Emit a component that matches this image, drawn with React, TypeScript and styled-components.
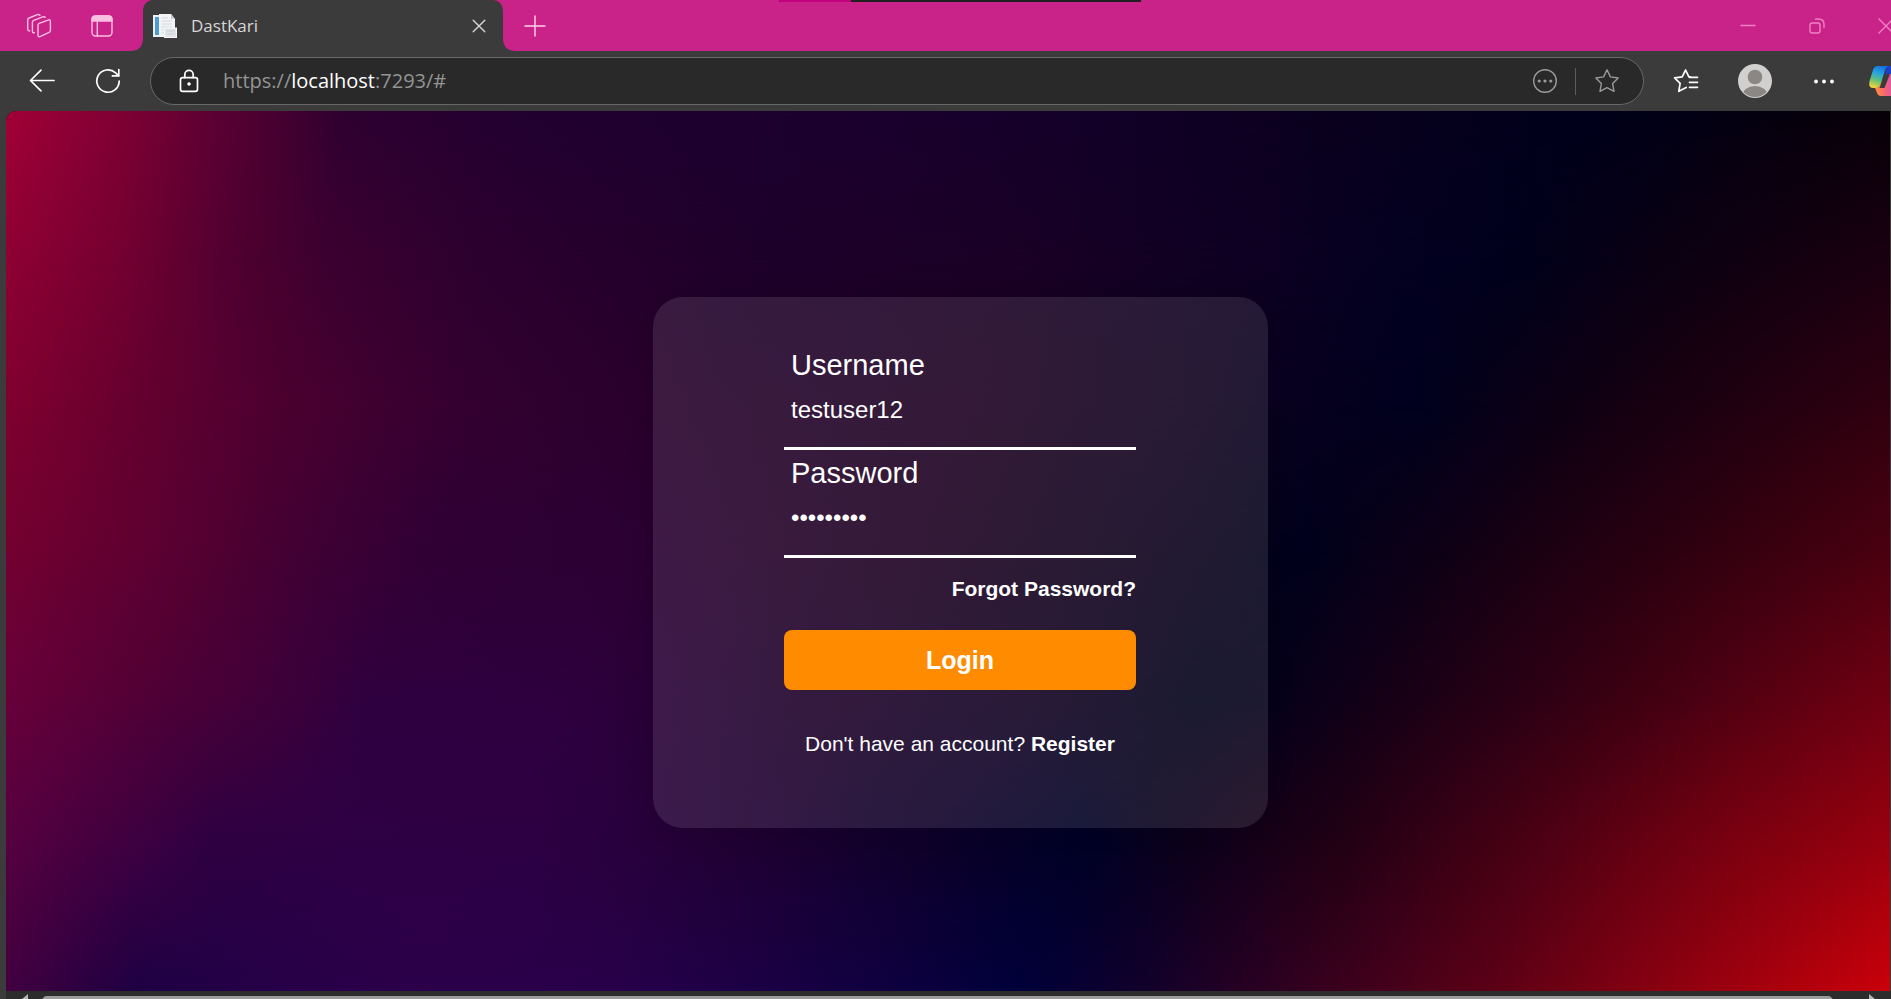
import React from "react";
import styled, { createGlobalStyle } from "styled-components";

const GlobalStyle = createGlobalStyle`
  * { box-sizing: border-box; }
  body { margin: 0; background: #3b3b3b; }
`;

const uiFont = `"Segoe UI", "Open Sans", sans-serif`;
const pageFont = `Arial, "Liberation Sans", sans-serif`;

/* ---------- Browser frame ---------- */

const Browser = styled.div`
  position: relative;
  display: flex;
  flex-direction: column;
  height: 100vh;
  overflow: hidden;
  background: #3b3b3b;
`;

const TitleBar = styled.header`
  display: flex;
  align-items: stretch;
  flex: none;
  height: 51px;
  padding-left: 7px;
  background: #c92288;
  overflow: hidden;
`;

const LoadingStrip = styled.div`
  position: absolute;
  top: 0;
  left: 41.2%;
  display: flex;
  width: 362px;
  height: 2px;
  background: linear-gradient(to right, #c0007c 72px, #1f1f1f 72px);
`;

const IconButton = styled.button<{ $width: number; $color?: string }>`
  display: flex;
  align-items: center;
  justify-content: center;
  flex: none;
  width: ${(p) => p.$width}px;
  padding: 0;
  border: 0;
  background: none;
  color: ${(p) => p.$color ?? "#ffffff"};

  svg {
    flex: none;
  }
`;

const Tab = styled.div`
  position: relative;
  display: flex;
  align-items: center;
  flex: none;
  width: 360px;
  height: 51px;
  margin: 0 8px 0 10px;
  padding: 0 12px 0 10px;
  border-radius: 10px 10px 0 0;
  background: #3b3b3b;

  &::before,
  &::after {
    content: "";
    position: absolute;
    bottom: 0;
    width: 10px;
    height: 10px;
  }
  &::before {
    right: 100%;
    background: radial-gradient(circle at 0 0, transparent 9px, #3b3b3b 10px);
  }
  &::after {
    left: 100%;
    background: radial-gradient(circle at 100% 0, transparent 9px, #3b3b3b 10px);
  }
`;

const TabTitle = styled.span`
  flex: 1;
  margin-left: 14px;
  color: #d6d6d6;
  font: 17px/24px ${uiFont};
`;

const WindowControls = styled.div`
  display: flex;
  margin-left: auto;
  margin-right: -29px;
`;

const Toolbar = styled.nav`
  display: flex;
  align-items: stretch;
  flex: none;
  height: 60px;
  padding: 6px 0 6px 9px;
  overflow: hidden;
`;

const AddressBar = styled.div`
  display: flex;
  align-items: center;
  flex: 1;
  min-width: 0;
  margin: 0 7px 0 9px;
  padding: 0 11px 0 26px;
  border: 1px solid #686868;
  border-radius: 24px;
  background: #292929;
`;

const Url = styled.div`
  flex: 1;
  margin-left: 22px;
  color: #949494;
  font: 20px/28px ${uiFont};
  white-space: nowrap;

  b {
    color: #ffffff;
    font-weight: 400;
  }
`;

const Divider = styled.span`
  width: 1px;
  height: 27px;
  margin: 0 6px 0 5px;
  background: #5c5c5c;
`;

const ToolbarActions = styled.div`
  display: flex;
  margin-right: -21px;
`;

const Scrollbar = styled.div`
  display: flex;
  align-items: flex-start;
  flex: none;
  height: 8px;
  margin-left: 6px;
  padding: 0 15px 0 15px;
  background: #2c2c2c;
  overflow: hidden;
`;

const ScrollThumb = styled.div`
  flex: 1;
  height: 10px;
  margin: 5px 35px 0 13px;
  border-radius: 5px;
  background: #9c9c9c;
`;

const ScrollArrow = styled.svg`
  flex: none;
  margin-top: 3px;
`;

/* ---------- Page backdrop ---------- */

const Page = styled.main`
  position: relative;
  isolation: isolate;
  display: flex;
  align-items: center;
  justify-content: center;
  flex: 1;
  margin: 0 1px 0 6px;
  padding: 22px 0 0 24px;
  border-radius: 10px 0 0 0;
  background: #14001f;
  overflow: hidden;
`;

/* Each wash fades in down to its own line, so neighbours blend into a soft mesh. */
const Wash = styled.div<{ $stops: string; $from: number; $to: number }>`
  position: absolute;
  inset: 0;
  z-index: -1;
  background: linear-gradient(to right, ${(p) => p.$stops});
  mask-image: linear-gradient(to bottom, transparent ${(p) => p.$from}%, #000 ${(p) => p.$to}%);
`;

const washes = [
  "#a20036, #800034 6%, #560032 12%, #2e0030 18%, #220030 27%, #1b002e 44%, #130028 58%, #0a001e 70%, #00001b 84%, #05000e 94%, #080008",
  "#8e0032, #740031 6%, #500030 12%, #3c0030 17%, #2c002e 25%, #1e002a 40%, #190025 54%, #0e0022 66%, #040020 74%, #00001c 80%, #0a0012 88%, #1a0010",
  "#80002f, #64002f 7%, #4a0030 15%, #340030 24%, #24002a 38%, #1c0021 52%, #110020 62%, #05001e 70%, #00001e 75%, #0c0014 82%, #1c0010 90%, #300010",
  "#730030, #5c0031 8%, #430033 15%, #310035 22%, #2b0033 33%, #200024 45%, #15001d 55%, #08001a 64%, #00001c 69%, #0c0016 75%, #260010 86%, #4a000f",
  "#68003a, #520036 7%, #420038 13%, #30003f 19%, #2e003e 30%, #1f002a 42%, #120022 54%, #02001a 63%, #04001a 67%, #1a0016 75%, #3c0012 86%, #700012",
  "#560040, #440040 5%, #2e0042 11%, #2e0045 18%, #2d0044 28%, #220034 38%, #0f002a 48%, #000026 57%, #0a001c 62%, #220014 71%, #500014 82%, #780010 91%, #9a000e",
  "#420040, #2c0040 4%, #1e0044 7%, #260048 14%, #2c004a 22%, #28004a 32%, #180044 42%, #08003e 50%, #00003a 54%, #10002c 60%, #300020 68%, #5c0016 79%, #900010 89%, #ca000a",
];

/* ---------- Login card ---------- */

const Card = styled.form`
  display: flex;
  flex-direction: column;
  align-items: center;
  flex: 0 1 615px;
  padding: 52px 24px 72px;
  border-radius: 30px;
  background: rgba(255, 255, 255, 0.1);
  box-shadow: 0 0 24px rgba(0, 0, 0, 0.15);
  color: #ffffff;
  font-family: ${pageFont};
`;

const CardBody = styled.div`
  display: flex;
  flex-direction: column;
  width: 100%;
  max-width: 352px;
`;

const Field = styled.div`
  display: flex;
  flex-direction: column;
  margin-bottom: 7px;
`;

const FieldLabel = styled.label`
  padding-left: 7px;
  font-size: 29px;
  line-height: 32px;
`;

const FieldInput = styled.input`
  width: 100%;
  height: 69px;
  padding: 15px 7px 23px;
  border: 0;
  border-bottom: 3px solid #ffffff;
  outline: 0;
  background: transparent;
  color: #ffffff;
  font: 24px/28px ${pageFont};
`;

const TextLink = styled.a`
  color: #ffffff;
  font-weight: 700;
  text-decoration: none;
`;

const ForgotRow = styled.div`
  margin-top: 12px;
  font-size: 21px;
  line-height: 24px;
  text-align: right;
`;

const LoginButton = styled.button`
  height: 60px;
  margin-top: 29px;
  border: 0;
  border-radius: 8px;
  background: #ff8c00;
  color: #ffffff;
  font: 700 25px/32px ${pageFont};
`;

const RegisterRow = styled.p`
  margin: 42px 0 0;
  font-size: 21px;
  line-height: 24px;
  text-align: center;
  white-space: nowrap;
`;

/* ---------- Icons ---------- */

type StrokeProps = { size?: number; weight?: number; children: React.ReactNode };

const Stroke = ({ size = 24, weight = 1.5, children }: StrokeProps) => (
  <svg
    width={size}
    height={size}
    viewBox={`0 0 ${size} ${size}`}
    fill="none"
    stroke="currentColor"
    strokeWidth={weight}
    strokeLinecap="round"
    strokeLinejoin="round"
    aria-hidden="true"
  >
    {children}
  </svg>
);

const WorkspacesIcon = () => (
  <Stroke size={26} weight={1.4}>
    <path d="M13.2 10.4 L22.6 6.9 Q24.4 6.4 24.4 8.2 V17.4 Q24.4 18.8 23.1 19.4 L14.5 23.4 Q12 24.4 12 22 V12.2 Q12 10.9 13.2 10.4 Z" />
    <path d="M8.3 19.8 Q6.4 20 6.4 18 V9.3 Q6.4 8 7.7 7.4 L16.8 3.9 Q18.4 3.3 19.2 4.3" />
    <path d="M3.6 18 Q1.7 17.8 1.7 15.8 V6.9 Q1.7 5.5 3 5 L11.4 1.7 Q13 1.1 14 2.2" />
  </Stroke>
);

const SidebarIcon = () => (
  <Stroke size={22} weight={1.4}>
    <rect x="1" y="1" width="20" height="20" rx="3.5" />
    <path d="M1 6 V4.5 Q1 1 4.5 1 H17.5 Q21 1 21 4.5 V6 Z" fill="currentColor" />
    <path d="M6.3 7 V21" />
  </Stroke>
);

const Favicon = () => (
  <svg width="24" height="24" viewBox="0 0 24 24" aria-hidden="true">
    <path d="M0 1 H11 V23 H0 Z" fill="#e9f1f7" />
    <path d="M2 3 H6 V21 H2 Z" fill="#4d9bcf" />
    <path d="M6 0 H18 L22 5 V23 H6 Z" fill="#f3f4f6" />
    <path d="M18 0 V5 H22 Z" fill="#c5ccd3" />
    <path d="M8.5 4 H15 M8.5 7 H19 M8.5 10 H19 M8.5 13 H19 M8.5 16 H12 M8.5 19 H11" stroke="#d3d7dc" strokeWidth="1" />
    <rect x="11.5" y="14" width="12" height="9.5" fill="#e1e5ea" stroke="#f7f7f7" />
    <path d="M13.5 17 H21.5 M13.5 20 H21.5" stroke="#c8cdd3" />
  </svg>
);

const SmallCrossIcon = () => (
  <Stroke size={16} weight={1.4}>
    <path d="M2.2 2.2 L13.8 13.8 M13.8 2.2 L2.2 13.8" />
  </Stroke>
);

const PlusIcon = () => (
  <Stroke weight={1.4}>
    <path d="M12 2 V22 M2 12 H22" />
  </Stroke>
);

const MinimizeIcon = () => (
  <Stroke size={18}>
    <path d="M2 8.5 H16" />
  </Stroke>
);

const RestoreIcon = () => (
  <Stroke size={18} weight={1.4}>
    <rect x="2" y="6" width="10" height="10" rx="2.2" />
    <path d="M7.5 2 H10.5 Q16 2 16 7.5 V10.5" />
  </Stroke>
);

const WindowCloseIcon = () => (
  <Stroke size={18} weight={1.4}>
    <path d="M2 2 L16 16 M16 2 L2 16" />
  </Stroke>
);

const BackIcon = () => (
  <Stroke size={26} weight={1.7}>
    <path d="M25 12.5 H1.5 M12 2.2 L1.5 12.5 L12 22.8" />
  </Stroke>
);

const RefreshIcon = () => (
  <Stroke size={26} weight={1.7}>
    <path d="M24.2 13 A11.2 11.2 0 1 1 20.6 4.8 L23.5 7.6" />
    <path d="M23.8 1.6 V7.9 H17.4" />
  </Stroke>
);

const LockIcon = () => (
  <Stroke weight={1.7}>
    <rect x="3.5" y="8.6" width="17" height="13.8" rx="2.2" />
    <path d="M7.8 8.6 V5.6 A4.2 4.2 0 0 1 16.2 5.6 V8.6" />
    <circle cx="12" cy="15" r="1.4" fill="currentColor" strokeWidth="0.6" />
  </Stroke>
);

const MoreCircleIcon = () => (
  <Stroke size={26} weight={1.4}>
    <circle cx="13" cy="13" r="11.3" />
    <g fill="currentColor" stroke="none">
      <circle cx="7.2" cy="13" r="1.6" />
      <circle cx="13" cy="13" r="1.6" />
      <circle cx="18.8" cy="13" r="1.6" />
    </g>
  </Stroke>
);

const StarIcon = () => (
  <Stroke size={26} weight={1.4}>
    <path d="M13 1.8 L16.4 8.9 L24.2 10 L18.6 15.5 L20 23.4 L13 19.7 L6 23.4 L7.4 15.5 L1.8 10 L9.6 8.9 Z" />
  </Stroke>
);

const FavoritesIcon = () => (
  <Stroke size={26} weight={1.7}>
    <path d="M17.4 8.8 H15.9 L12.6 2 L9.2 8.8 L1.6 9.9 L7.1 15.3 L5.8 23.3 L13.2 19.4" />
    <path d="M16.5 9.3 H24.5 M16.5 14.3 H24.5 M16.5 19.3 H24.5" />
  </Stroke>
);

const AvatarIcon = () => (
  <svg width="34" height="34" viewBox="0 0 34 34" aria-hidden="true">
    <defs>
      <clipPath id="avatar-disc">
        <circle cx="17" cy="17" r="16" />
      </clipPath>
    </defs>
    <circle cx="17" cy="17" r="17" fill="#d2d0ce" />
    <circle cx="17" cy="13" r="7.3" fill="#8a8785" />
    <ellipse cx="17" cy="31" rx="12.5" ry="9" fill="#8a8785" clipPath="url(#avatar-disc)" />
  </svg>
);

const MoreIcon = () => (
  <svg width="24" height="24" viewBox="0 0 24 24" fill="currentColor" aria-hidden="true">
    <circle cx="4" cy="12.5" r="1.9" />
    <circle cx="12" cy="12.5" r="1.9" />
    <circle cx="20" cy="12.5" r="1.9" />
  </svg>
);

const CopilotIcon = () => (
  <svg width="32" height="32" viewBox="0 0 32 32" aria-hidden="true">
    <defs>
      <linearGradient id="copilot-cool" x1="0.6" y1="0" x2="0.3" y2="1">
        <stop offset="0" stopColor="#1673e0" />
        <stop offset="0.35" stopColor="#27a5e0" />
        <stop offset="0.65" stopColor="#5fc07a" />
        <stop offset="1" stopColor="#f3d33a" />
      </linearGradient>
      <linearGradient id="copilot-warm" x1="0" y1="0.3" x2="1" y2="0.2">
        <stop offset="0" stopColor="#ff8a3e" />
        <stop offset="0.4" stopColor="#f4607d" />
        <stop offset="1" stopColor="#b24be8" />
      </linearGradient>
    </defs>
    <path d="M13 1 H21 Q24 1 25 4 L26.5 10 H16 L17 2 Z" fill="#1c3fc4" />
    <path d="M9 1 H20 Q17 1.5 16 5 L12 18 Q10.6 23 7 23 H4 Q-1 23 .6 16 L4 5 Q5.2 1 9 1 Z" fill="url(#copilot-cool)" />
    <path d="M6 23 Q10 23 11.6 19 L16 12 Q17.5 9 20 9 H27 Q33 8 31.4 15 L28 26 Q26.8 31 22 31 H12 Q9 31 8 28 Z" fill="url(#copilot-warm)" />
    <path d="M16 9 H21 L15.5 23 H10.5 Z" fill="#3b3b3b" />
  </svg>
);

/* ---------- Screen ---------- */

const windowColor = "#ee82c4";
const titleIconColor = "#f9bfe0";
const mutedColor = "#9b9b9b";

const App = () => (
  <>
    <GlobalStyle />
    <Browser>
      <TitleBar>
        <IconButton type="button" $width={63} $color={titleIconColor} aria-label="Workspaces">
          <WorkspacesIcon />
        </IconButton>
        <IconButton type="button" $width={63} $color={titleIconColor} aria-label="Tab actions">
          <SidebarIcon />
        </IconButton>
        <Tab>
          <Favicon />
          <TabTitle>DastKari</TabTitle>
          <IconButton type="button" $width={24} $color="#d6d6d6" aria-label="Close tab">
            <SmallCrossIcon />
          </IconButton>
        </Tab>
        <IconButton type="button" $width={48} $color="#fbd3ea" aria-label="New tab">
          <PlusIcon />
        </IconButton>
        <WindowControls>
          <IconButton type="button" $width={69} $color={windowColor} aria-label="Minimize">
            <MinimizeIcon />
          </IconButton>
          <IconButton type="button" $width={69} $color={windowColor} aria-label="Restore">
            <RestoreIcon />
          </IconButton>
          <IconButton type="button" $width={69} $color={windowColor} aria-label="Close window">
            <WindowCloseIcon />
          </IconButton>
        </WindowControls>
      </TitleBar>
      <LoadingStrip />

      <Toolbar>
        <IconButton type="button" $width={66} aria-label="Back">
          <BackIcon />
        </IconButton>
        <IconButton type="button" $width={66} aria-label="Refresh">
          <RefreshIcon />
        </IconButton>
        <AddressBar>
          <IconButton type="button" $width={24} aria-label="Site information">
            <LockIcon />
          </IconButton>
          <Url>
            https://<b>localhost</b>:7293/#
          </Url>
          <IconButton type="button" $width={50} $color={mutedColor} aria-label="More page actions">
            <MoreCircleIcon />
          </IconButton>
          <Divider />
          <IconButton type="button" $width={50} $color={mutedColor} aria-label="Add to favorites">
            <StarIcon />
          </IconButton>
        </AddressBar>
        <ToolbarActions>
          <IconButton type="button" $width={69} aria-label="Favorites">
            <FavoritesIcon />
          </IconButton>
          <IconButton type="button" $width={69} aria-label="Profile">
            <AvatarIcon />
          </IconButton>
          <IconButton type="button" $width={69} aria-label="Settings and more">
            <MoreIcon />
          </IconButton>
          <IconButton type="button" $width={54} aria-label="Copilot">
            <CopilotIcon />
          </IconButton>
        </ToolbarActions>
      </Toolbar>

      <Page>
        {washes.map((stops, i) => (
          <Wash
            key={i}
            $stops={stops}
            $from={i === 0 ? -1 : ((i - 1) * 100) / (washes.length - 1)}
            $to={(i * 100) / (washes.length - 1)}
          />
        ))}
        <Card onSubmit={(e) => e.preventDefault()}>
          <CardBody>
            <Field>
              <FieldLabel htmlFor="username">Username</FieldLabel>
              <FieldInput id="username" type="text" defaultValue="testuser12" autoComplete="off" />
            </Field>
            <Field>
              <FieldLabel htmlFor="password">Password</FieldLabel>
              <FieldInput id="password" type="password" defaultValue="secret123" autoComplete="off" />
            </Field>
            <ForgotRow>
              <TextLink href="#">Forgot Password?</TextLink>
            </ForgotRow>
            <LoginButton type="submit">Login</LoginButton>
            <RegisterRow>
              Don't have an account? <TextLink href="#">Register</TextLink>
            </RegisterRow>
          </CardBody>
        </Card>
      </Page>

      <Scrollbar>
        <ScrollArrow width="8" height="10" viewBox="0 0 8 10" aria-hidden="true">
          <path d="M7 0 V10 L1 5 Z" fill="#b5b5b5" />
        </ScrollArrow>
        <ScrollThumb />
        <ScrollArrow width="8" height="10" viewBox="0 0 8 10" aria-hidden="true">
          <path d="M1 0 V10 L7 5 Z" fill="#b5b5b5" />
        </ScrollArrow>
      </Scrollbar>
    </Browser>
  </>
);

export default App;
